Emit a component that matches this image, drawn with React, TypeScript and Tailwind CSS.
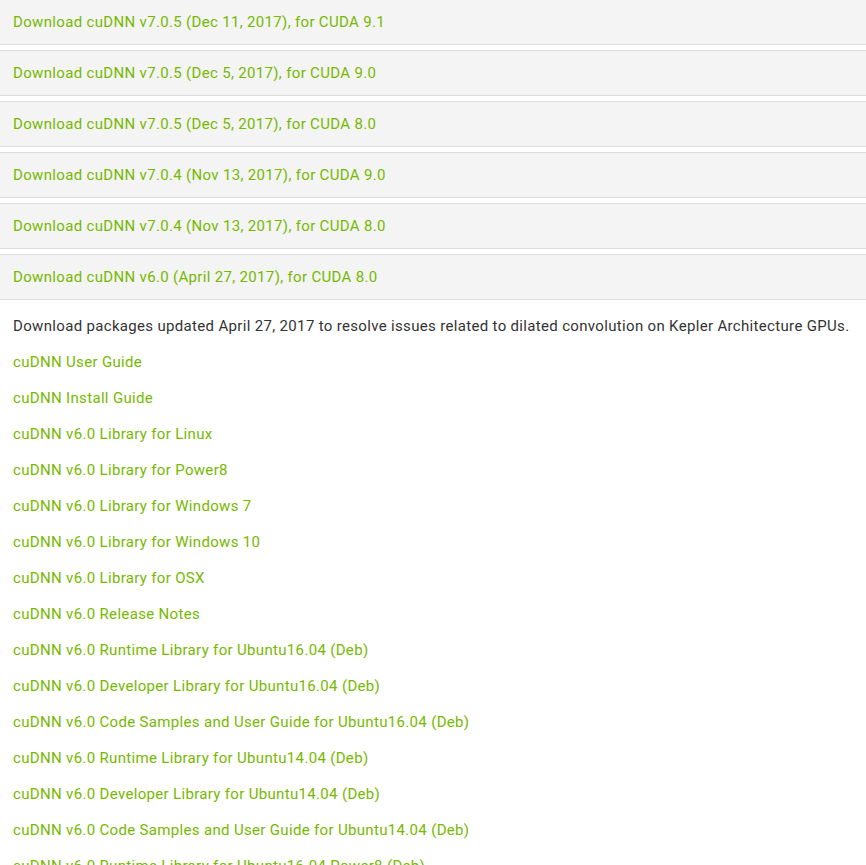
const releases = [
  "Download cuDNN v7.0.5 (Dec 11, 2017), for CUDA 9.1",
  "Download cuDNN v7.0.5 (Dec 5, 2017), for CUDA 9.0",
  "Download cuDNN v7.0.5 (Dec 5, 2017), for CUDA 8.0",
  "Download cuDNN v7.0.4 (Nov 13, 2017), for CUDA 9.0",
  "Download cuDNN v7.0.4 (Nov 13, 2017), for CUDA 8.0",
  "Download cuDNN v6.0 (April 27, 2017), for CUDA 8.0",
];

const files = [
  "cuDNN User Guide",
  "cuDNN Install Guide",
  "cuDNN v6.0 Library for Linux",
  "cuDNN v6.0 Library for Power8",
  "cuDNN v6.0 Library for Windows 7",
  "cuDNN v6.0 Library for Windows 10",
  "cuDNN v6.0 Library for OSX",
  "cuDNN v6.0 Release Notes",
  "cuDNN v6.0 Runtime Library for Ubuntu16.04 (Deb)",
  "cuDNN v6.0 Developer Library for Ubuntu16.04 (Deb)",
  "cuDNN v6.0 Code Samples and User Guide for Ubuntu16.04 (Deb)",
  "cuDNN v6.0 Runtime Library for Ubuntu14.04 (Deb)",
  "cuDNN v6.0 Developer Library for Ubuntu14.04 (Deb)",
  "cuDNN v6.0 Code Samples and User Guide for Ubuntu14.04 (Deb)",
  "cuDNN v6.0 Runtime Library for Ubuntu16.04 Power8 (Deb)",
  "cuDNN v6.0 Developer Library for Ubuntu16.04 Power8 (Deb)",
];

function ReleaseHeading({ title }: { title: string }) {
  return (
    <div className="mt-[5px] border-y border-[#dddddd] bg-[#f4f4f4] px-[13px] py-[10px] first:-mt-px">
      <a href="#" className="text-[#76b900]">
        {title}
      </a>
    </div>
  );
}

export default function App() {
  return (
    <div
      className="h-[865px] overflow-hidden bg-white text-[15px] leading-6 tracking-[0.33px]"
      style={{ fontFamily: "Roboto, 'Liberation Sans', sans-serif" }}
    >
      <div className="flex flex-col">
        {releases.map((title) => (
          <ReleaseHeading key={title} title={title} />
        ))}
      </div>

      <div className="flex flex-col gap-3 px-[13px] pt-[14px]">
        <p className="whitespace-nowrap text-[#333333]">
          Download packages updated April 27, 2017 to resolve issues related to dilated convolution on Kepler Architecture GPUs.
        </p>
        {files.map((file) => (
          <a key={file} href="#" className="text-[#76b900]">
            {file}
          </a>
        ))}
      </div>
    </div>
  );
}
